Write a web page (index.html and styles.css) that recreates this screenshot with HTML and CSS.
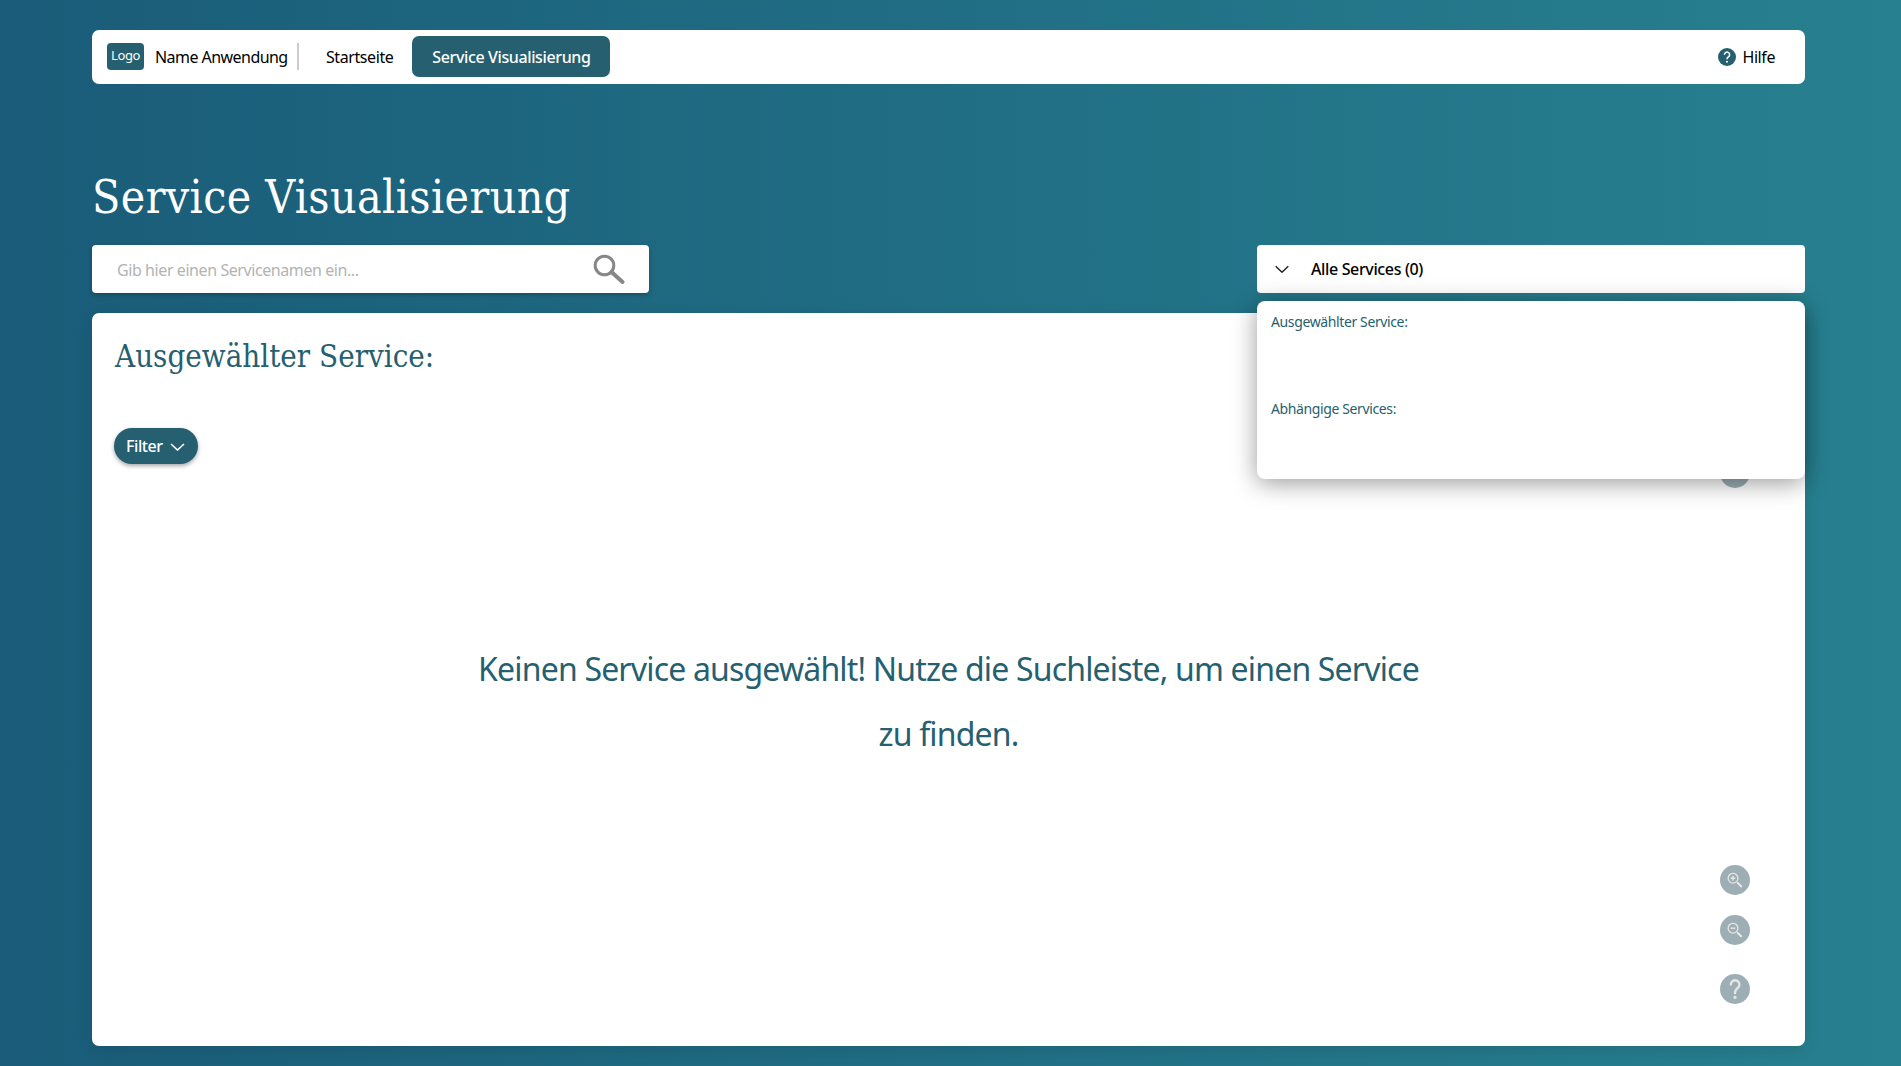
FILE: index.html
```
<!DOCTYPE html>
<html lang="de">
<head>
  <meta charset="UTF-8">
  <meta name="viewport" content="width=device-width, initial-scale=1.0">
  <title>Service Visualisierung</title>
  <link rel="stylesheet" href="styles.css">
</head>
<body>

  <header class="navbar">
    <div class="logo"><span>Logo</span></div>
    <span class="app-name">Name Anwendung</span>
    <nav>
      <a class="nav-link">Startseite</a>
      <a class="nav-link active">Service Visualisierung</a>
    </nav>
    <a class="help-link">
      <svg width="18" height="18" viewBox="0 0 18 18">
        <circle cx="9" cy="9" r="9" fill="#265f70"/>
        <path d="M6.4 6.8a2.6 2.6 0 1 1 4.1 2C9.6 9.5 9 9.9 9 11.2" fill="none" stroke="#fff" stroke-width="1.5"/>
        <circle cx="9" cy="13.8" r="1" fill="#fff"/>
      </svg>
      <span>Hilfe</span>
    </a>
  </header>

  <main>
    <h1>Service Visualisierung</h1>

    <div class="toolbar">
      <div class="search">
        <input type="text" placeholder="Gib hier einen Servicenamen ein...">
        <svg width="32" height="30" viewBox="0 0 32 30" fill="none" stroke="#878787">
          <circle cx="11.5" cy="11.5" r="9.3" stroke-width="3"/>
          <path d="M18.5 18L29.5 28" stroke-width="4" stroke-linecap="round"/>
        </svg>
      </div>

      <div class="dropdown">
        <div class="dropdown-toggle">
          <svg width="14" height="8" viewBox="0 0 14 8" fill="none" stroke="#222" stroke-width="1.5">
            <path d="M.7 1.3L7 7.2L13.3 1.3"/>
          </svg>
          <span>Alle Services (0)</span>
        </div>
        <div class="dropdown-menu">
          <p>Ausgewählter Service:</p>
          <p>Abhängige Services:</p>
        </div>
      </div>
    </div>

    <section class="panel">
      <h2>Ausgewählter Service:</h2>
      <button class="filter">
        <span>Filter</span>
        <svg width="15" height="9" viewBox="0 0 15 9" fill="none" stroke="#fff" stroke-width="1.6">
          <path d="M1 2L7.5 8L14 2"/>
        </svg>
      </button>

      <p class="message">Keinen Service ausgewählt! Nutze die Suchleiste, um einen Service zu finden.</p>

      <!-- graph controls -->
      <div class="controls">
        <button class="control fullscreen"></button>
        <button class="control zoom-in">
          <svg width="30" height="30" viewBox="0 0 30 30" fill="none" stroke="#e6e6e6">
            <circle cx="13" cy="13.2" r="4.9" stroke-width="1.3"/>
            <path d="M10.7 13.2h4.6M13 10.9v4.6" stroke-width="1.5"/>
            <path d="M17.8 18l3.3 3.3" stroke-width="2.2" stroke-linecap="round"/>
          </svg>
        </button>
        <button class="control zoom-out">
          <svg width="30" height="30" viewBox="0 0 30 30" fill="none" stroke="#e6e6e6">
            <circle cx="13" cy="13.2" r="4.9" stroke-width="1.3"/>
            <path d="M10.7 13.2h4.6" stroke-width="1.5"/>
            <path d="M17.8 18l3.3 3.3" stroke-width="2.2" stroke-linecap="round"/>
          </svg>
        </button>
        <button class="control info">
          <svg width="30" height="30" viewBox="0 0 30 30" fill="none" stroke="#e6e6e6">
            <path d="M10.8 10.6a4.3 4.3 0 1 1 7 3.3C15.8 15.5 15 16.4 15 19.2" stroke-width="2.3" stroke-linecap="round"/>
            <circle cx="15" cy="23.3" r="1.6" fill="#e6e6e6" stroke="none"/>
          </svg>
        </button>
      </div>
    </section>
  </main>

</body>
</html>
```
FILE: styles.css
```
* {
  box-sizing: border-box;
}

body {
  margin: 0;
  padding: 30px 96px 20px 92px;
  height: 100vh;
  overflow: hidden;
  display: flex;
  flex-direction: column;
  font-family: 'Noto Sans', sans-serif;
  font-size: 16px;
  letter-spacing: -0.42px;
  color: #000;
  background: linear-gradient(90deg, #1a5c79, #27808f);
}

button {
  border: none;
  padding: 0;
  font: inherit;
  letter-spacing: inherit;
}

svg {
  display: block;
  flex: none;
}

/* Navigation */
.navbar {
  display: flex;
  align-items: center;
  height: 54px;
  padding: 0 30px 0 15px;
  background-color: #fff;
  border-radius: 7px;
}

.logo {
  display: flex;
  align-items: center;
  justify-content: center;
  width: 37px;
  height: 27px;
  margin: 0 11px 1px 0;
  font-size: 13px;
  line-height: 25px;
  padding-bottom: 2px;
  color: #fff;
  background-color: #265f70;
  border-radius: 4px;
}

.app-name {
  width: 144px;
  height: 27px;
  margin-bottom: 1px;
  line-height: 29px;
  letter-spacing: -0.55px;
  white-space: nowrap;
  border-right: 2px solid #ccc;
}

nav {
  display: flex;
  align-items: center;
  margin: 0 0 1px 7px;
}

.nav-link {
  height: 41px;
  padding: 0 19px 0 20px;
  line-height: 43px;
}

.nav-link.active {
  padding-right: 20px;
  color: #fff;
  background-color: #265f70;
  border-radius: 7px;
  font-weight: 500;
  letter-spacing: -0.38px;
}

.help-link {
  display: flex;
  align-items: center;
  gap: 6px;
  margin-left: auto;
}

/* Content */
main {
  flex: 1;
  display: flex;
  flex-direction: column;
}

h1,
h2 {
  margin: 0;
  font-family: 'DejaVu Serif Condensed', 'DejaVu Serif', serif;
  font-weight: 300;
}

h1 {
  margin-top: 84px;
  height: 77px;
  font-size: 46px;
  line-height: 58px;
  letter-spacing: 0.4px;
  color: #fff;
}

.toolbar {
  display: flex;
  justify-content: space-between;
}

.search {
  display: flex;
  align-items: center;
  width: 557px;
  height: 48px;
  padding: 0 24px 0 25px;
  background-color: #fff;
  border-radius: 4px;
  box-shadow: 0 2px 4px rgba(0, 0, 0, 0.25);
}

.search input {
  flex: 1;
  border: none;
  padding: 1px 0 0;
  outline: none;
  font: inherit;
  letter-spacing: inherit;
  background: none;
}

.search input::placeholder {
  color: #b3b3b3;
}

.dropdown {
  position: relative;
  width: 548px;
}

.dropdown-toggle {
  display: flex;
  align-items: center;
  gap: 22px;
  height: 48px;
  padding-left: 18px;
  font-weight: 500;
  letter-spacing: -0.36px;
  background-color: #fff;
  border-radius: 4px;
}

.dropdown-menu {
  position: absolute;
  top: 56px;
  left: 0;
  z-index: 2;
  width: 100%;
  height: 178px;
  padding: 11px 14px;
  font-size: 14px;
  letter-spacing: -0.38px;
  color: #265f70;
  background-color: #fff;
  border-radius: 8px;
  box-shadow: 0 4px 24px rgba(0, 0, 0, 0.4);
}

.dropdown-menu p {
  margin: 0 0 67px;
  line-height: 20px;
}

.panel {
  position: relative;
  flex: 1;
  margin-top: 20px;
  padding: 22px;
  color: #265f70;
  background-color: #fff;
  border-radius: 7px;
  box-shadow: 0 4px 16px rgba(0, 0, 0, 0.1);
}

h2 {
  height: 93px;
  padding-left: 1px;
  font-size: 31px;
  line-height: 42px;
  letter-spacing: 0;
}

.filter {
  display: flex;
  align-items: center;
  gap: 7px;
  width: 84px;
  height: 36px;
  padding-left: 12px;
  font-weight: 500;
  color: #fff;
  background-color: #265f70;
  border-radius: 18px;
  box-shadow: 0 2px 4px rgba(0, 0, 0, 0.35);
}

.message {
  width: 960px;
  margin: 172px auto 0;
  font-size: 32px;
  line-height: 65px;
  letter-spacing: -0.82px;
  text-align: center;
}

/* Buttons floating over the graph area */
.controls {
  position: absolute;
  right: 55px;
  bottom: 42px;
}

.control {
  display: block;
  width: 30px;
  height: 30px;
  background-color: #9dafb5;
  border-radius: 50%;
}

.fullscreen {
  margin-bottom: 377px;
}

.zoom-in {
  margin-bottom: 20px;
}

.zoom-out {
  margin-bottom: 29px;
}
```
